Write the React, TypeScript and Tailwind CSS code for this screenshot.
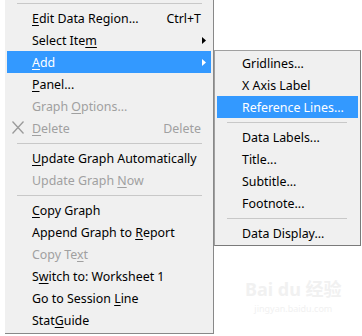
import React from 'react';

type Item =
    | { kind: 'sep' }
    | {
          kind?: 'item';
          label: string;
          mn?: number; // index of mnemonic letter
          shortcut?: string;
          disabled?: boolean;
          active?: boolean;
          arrow?: boolean;
          icon?: 'x';
      };

const mainItems: Item[] = [
    { label: 'Edit Data Region...', mn: 0, shortcut: 'Ctrl+T' },
    { label: 'Select Item', mn: 10, arrow: true },
    { label: 'Add', mn: 0, arrow: true, active: true },
    { label: 'Panel...', mn: 0 },
    { label: 'Graph Options...', mn: 6, disabled: true },
    { label: 'Delete', mn: 0, shortcut: 'Delete', disabled: true, icon: 'x' },
    { kind: 'sep' },
    { label: 'Update Graph Automatically', mn: 0 },
    { label: 'Update Graph Now', mn: 13, disabled: true },
    { kind: 'sep' },
    { label: 'Copy Graph', mn: 0 },
    { label: 'Append Graph to Report', mn: 16 },
    { label: 'Copy Text', mn: 7, disabled: true },
    { label: 'Switch to: Worksheet 1', mn: 1 },
    { label: 'Go to Session Line', mn: 14 },
    { label: 'StatGuide', mn: 4 },
];

const subItems: Item[] = [
    { label: 'Gridlines...' },
    { label: 'X Axis Label' },
    { label: 'Reference Lines...', active: true },
    { kind: 'sep' },
    { label: 'Data Labels...' },
    { label: 'Title...' },
    { label: 'Subtitle...' },
    { label: 'Footnote...' },
    { kind: 'sep' },
    { label: 'Data Display...' },
];

function Label({ text, mn }: { text: string; mn?: number }) {
    if (mn === undefined) return <span>{text}</span>;
    return (
        <span>
            {text.slice(0, mn)}
            <span className="underline underline-offset-2">{text[mn]}</span>
            {text.slice(mn + 1)}
        </span>
    );
}

function Arrow({ white }: { white?: boolean }) {
    return (
        <svg width="4" height="7" viewBox="0 0 4 7" className="absolute right-[5px] top-[8px]">
            <path d="M0 0 L4 3.5 L0 7 Z" fill={white ? '#ffffff' : '#000000'} />
        </svg>
    );
}

function MenuRows({ items, sepClass, textPad }: { items: Item[]; sepClass: string; textPad: string }) {
    return (
        <>
            {items.map((it, i) => {
                if (it.kind === 'sep') {
                    return (
                        <div key={i} className="h-[8px] flex items-center">
                            <div className={`h-px bg-[#c8c8c8] ${sepClass}`} />
                        </div>
                    );
                }
                const color = it.active ? 'text-white bg-[#3399ff]' : it.disabled ? 'text-[#a0a0a0]' : 'text-black';
                return (
                    <div key={i} className={`relative h-[22px] mx-[2px] pt-[2px] flex items-center ${textPad} ${color}`}>
                        {it.icon === 'x' && (
                            <svg width="12" height="13" viewBox="0 0 12 13" className="absolute left-[5px] top-[4px]">
                                <path d="M0.5 0.5 L11.5 12.5 M11.5 0.5 L0.5 12.5" stroke="#9a9a9a" strokeWidth="1.3" fill="none" />
                            </svg>
                        )}
                        <Label text={it.label} mn={it.mn} />
                        {it.shortcut && <span className="absolute right-[10px]">{it.shortcut}</span>}
                        {it.arrow && <Arrow white={it.active} />}
                    </div>
                );
            })}
        </>
    );
}

export default function App() {
    return (
        <div
            className="relative w-[362px] h-[336px] overflow-hidden bg-white text-[12.4px] leading-none"
            style={{ fontFamily: '"Noto Sans", "Noto Sans CJK SC", sans-serif' }}
        >
            {/* main context menu */}
            <div className="ml-[5px] w-[209px] bg-[#f0f0f0] border-r border-b border-[#888888]">
                <div className="h-[7px] flex items-center">
                    <div className="h-px bg-[#c8c8c8] ml-[12px] w-[185px] mt-[-1px]" />
                </div>
                <MenuRows items={mainItems} sepClass="ml-[12px] w-[185px]" textPad="pl-[25px]" />
                <div className="h-[2px]" />
            </div>

            {/* Add submenu */}
            <div className="absolute left-[214px] top-[50px] w-[147px] bg-[#f0f0f0] border border-[#a0a0a0] border-r-[#7a7a7a] border-b-[#7a7a7a] py-[1px]">
                <MenuRows items={subItems} sepClass="ml-[12px] w-[120px]" textPad="pl-[25px]" />
            </div>

            {/* faint watermark */}
            <div className="absolute left-[245px] top-[280px] text-[#f1f1f1] flex flex-col items-center gap-[6px]">
                <span className="text-[18px] font-bold leading-[18px]">Bai du 经验</span>
                <span className="text-[9px] leading-[9px]">jingyan.baidu.com</span>
            </div>
        </div>
    );
}
